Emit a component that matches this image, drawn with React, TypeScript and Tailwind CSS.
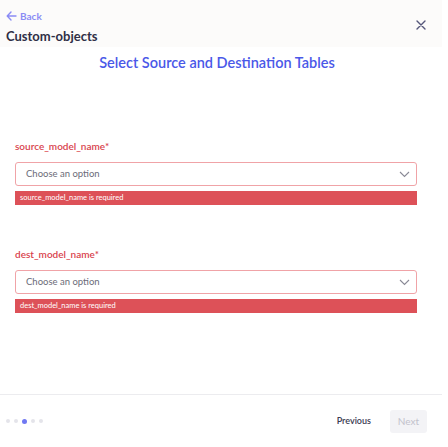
import React from "react";

function Field({ label, error }: { label: string; error: string }) {
  return (
    <div className="flex flex-col">
      <div className="text-[10px] font-semibold text-[#d9434d] leading-[14px]">{label}*</div>
      <div className="mt-[9px] h-[24px] rounded-[3px] border border-[#f0a3a7] bg-white flex items-center justify-between pl-[10px] pr-[6px]">
        <span className="text-[9.5px] text-[#6b6b78]">Choose an option</span>
        <svg width="11" height="7" viewBox="0 0 11 7" fill="none">
          <path d="M1 1l4.5 4.5L10 1" stroke="#8a8a96" strokeWidth="1.1" />
        </svg>
      </div>
      <div className="mt-[5px] h-[14px] bg-[#dd5158] flex items-center pl-[5px]">
        <span className="text-[7.5px] text-white leading-none">{error}</span>
      </div>
    </div>
  );
}

export default function App() {
  return (
    <div
      className="w-[448px] h-[447px] bg-white flex flex-col overflow-hidden"
      style={{ fontFamily: "Lato, 'Noto Sans', sans-serif" }}
    >
      <div className="h-[47px] bg-[#fcfbfa] flex justify-between pl-[6px] pr-[16px] mr-[6px]">
        <div className="flex flex-col pt-[10px]">
          <div className="flex items-center gap-[3px] text-[#8b8cf5]">
            <svg width="11" height="10" viewBox="0 0 11 10" fill="none">
              <path d="M10 5H1.5M5 1L1.2 5 5 9" stroke="#8b8cf5" strokeWidth="1.4" strokeLinecap="round" strokeLinejoin="round" />
            </svg>
            <span className="text-[10px] font-bold leading-[12px]">Back</span>
          </div>
          <div className="mt-[5px] text-[13px] font-bold text-[#2f2f46] leading-[18px]">Custom-objects</div>
        </div>
        <div className="pt-[20px]">
          <svg width="10" height="10" viewBox="0 0 10 10" fill="none">
            <path d="M1 1l8 8M9 1l-8 8" stroke="#55567a" strokeWidth="1.4" strokeLinecap="round" />
          </svg>
        </div>
      </div>
      <div className="flex-1 flex flex-col mr-[6px]">
        <div className="text-center text-[14.5px] font-semibold text-[#4a58e8] mt-[6px] leading-[20px] pr-[8px]">
          Select Source and Destination Tables
        </div>
        <div className="flex flex-col px-[15px] mt-[66px] gap-[42px] pr-[25px]">
          <Field label="source_model_name" error="source_model_name is required" />
          <Field label="dest_model_name" error="dest_model_name is required" />
        </div>
      </div>
      <div className="h-[53px] border-t border-[#ececef] mr-[6px] flex items-center justify-between pl-[6px] pr-[15px]">
        <div className="flex items-center gap-[4px]">
          <span className="w-[4px] h-[4px] rounded-full bg-[#e4e4ea]" />
          <span className="w-[4px] h-[4px] rounded-full bg-[#e4e4ea]" />
          <span className="w-[5px] h-[5px] rounded-full bg-[#7078f2]" />
          <span className="w-[4px] h-[4px] rounded-full bg-[#e4e4ea]" />
          <span className="w-[4px] h-[4px] rounded-full bg-[#e4e4ea]" />
        </div>
        <div className="flex items-center gap-[19px]">
          <span className="text-[9px] font-semibold text-[#3a3a52]">Previous</span>
          <div className="w-[37px] h-[23px] rounded-[3px] bg-[#f3f3f6] flex items-center justify-center">
            <span className="text-[10px] text-[#c2c2cc]">Next</span>
          </div>
        </div>
      </div>
    </div>
  );
}
